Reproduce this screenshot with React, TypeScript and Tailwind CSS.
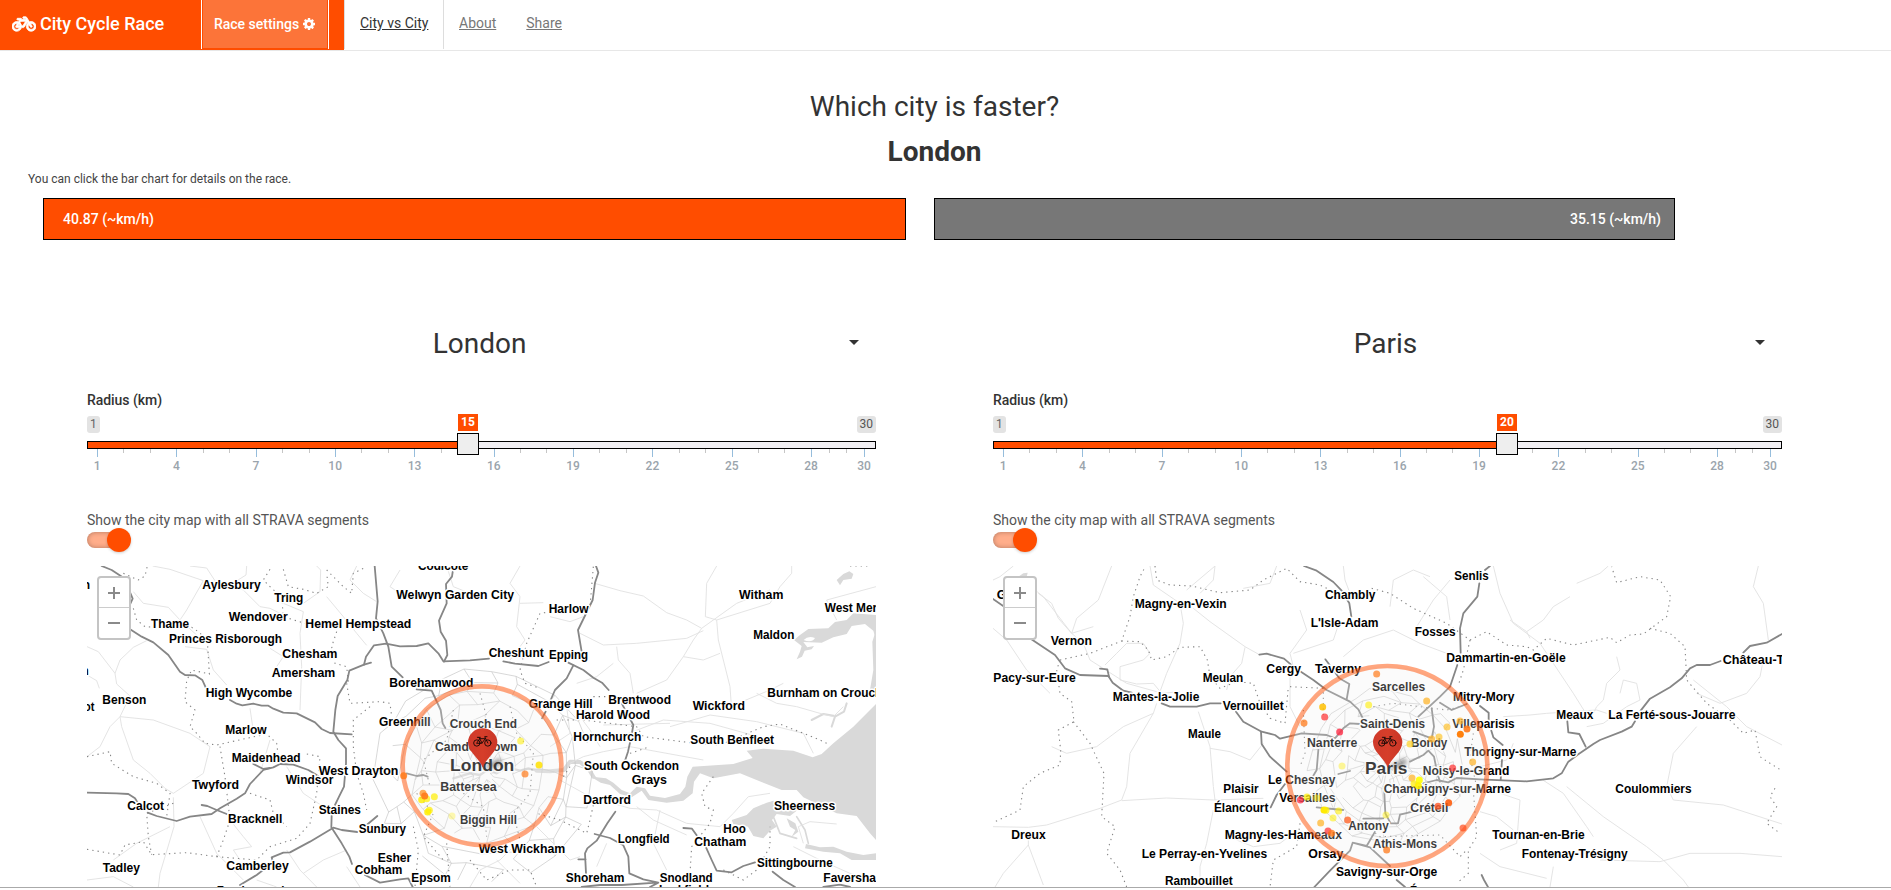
import React from "react";
import { FaBicycle } from "react-icons/fa";

type Label = [text: string, x: number, y: number, width: number, size?: number];
type Dot = [x: number, y: number, color: string, opacity?: number];

interface CityMap {
  origin: number;
  water: string[];
  urban: { cx: number; cy: number; r: number; seed: number };
  motorways: string[];
  roads: string[];
  borders: string[];
  labels: Label[];
  dots: Dot[];
  circle: { cx: number; cy: number; r: number };
  pin: { x: number; y: number };
}

const YELLOW = "#ffee00";
const AMBER = "#ffb52e";
const ORANGE = "#ff7a1a";
const RED = "#ff3b3b";

const london: CityMap = {
  origin: 51,
  water: [
    "M2418 165 L2350 160 L2330 180 L2295 186 L2275 205 L2215 207 L2190 225 L2172 240 L2195 258 L2190 275 L2180 298 L2196 290 L2204 272 L2225 268 L2232 258 L2212 262 L2200 246 L2255 248 L2290 232 L2330 222 L2345 198 L2385 192 L2410 212 L2418 240Z",
    "M2201 240 Q2215 225 2235 234 Q2225 250 2201 240Z",
    "M2418 210 L2407 245 L2410 330 L2400 390 L2380 412 L2418 410Z",
    "M2418 432 L2350 500 L2290 550 L2255 582 L2228 592 L2170 572 L2080 566 L2030 572 L2048 594 L1990 612 L1868 620 L1852 650 L1846 680 L1830 702 L1785 714 L1740 707 L1725 685 L1700 680 L1680 700 L1655 690 L1630 668 L1608 655 L1580 652 L1560 640 L1570 655 L1592 668 L1620 675 L1650 702 L1685 712 L1715 692 L1735 720 L1790 728 L1840 722 L1868 700 L1872 665 L1890 640 L1930 655 L2010 640 L2080 668 L2135 690 L2180 690 L2200 712 L2300 760 L2360 768 L2400 820 L2418 840Z",
    "M2418 880 L2380 885 L2330 875 L2290 860 L2250 862 L2208 852 L2205 865 L2260 875 L2310 880 L2345 900 L2418 900Z",
    "M1985 780 L2030 765 L2050 745 L2090 728 L2110 722 L2125 738 L2165 740 L2180 752 L2160 768 L2120 762 L2106 780 L2120 800 L2100 812 L2080 835 L2050 828 L2034 800 L1990 792Z",
    "M2300 60 L2320 42 L2338 34 L2350 42 L2345 56 L2320 60 L2310 76Z",
    "M2150 775 L2160 800 L2176 810 L2165 830 L2185 815 L2176 790Z",
  ],
  urban: { cx: 1240, cy: 640, r: 330, seed: 7 },
  motorways: [
    "M95 18 L125 30 L158 52",
    "M178 92 L188 116 L178 138",
    "M178 206 L215 230 L250 247 L295 285 L330 335 L345 345 L375 346 L397 360 L407 382",
    "M480 420 L500 431 L517 436 L550 431 L575 437 L595 437 L610 446 L640 458 L680 460 L735 487 L755 507 L780 519 L845 523",
    "M914 18 L923 124 L918 175 L940 220 L955 260 L965 320 L998 352 M1040 388 L1085 392 L1112 450 L1118 490 L1126 504",
    "M1148 36 L1146 50 L1128 72 L1130 130 L1107 182 L1112 215 L1128 242 L1132 285 L1122 305",
    "M903 308 L882 314 L838 332 L832 360 L803 408 L796 450 L790 515 L805 540 L828 565 L828 610 L822 680 L806 712 L795 735 M785 766 L784 802 L815 850 L838 890 L846 912",
    "M882 314 L888 290 L912 256 L948 251 L990 259 L1040 258 L1075 250 L1105 280 L1120 304 L1200 301 L1257 296 M1300 304 L1335 311 L1405 318 L1436 306 M1495 308 L1540 330 L1570 353 L1596 368 L1616 390 M1655 430 L1690 495 L1684 530 L1674 575 L1665 602",
    "M1578 18 L1585 38 L1575 68 L1568 120 L1524 210 L1535 275 M1510 316 L1490 355 L1455 390 L1442 420 M1427 455 L1416 475",
    "M51 698 L140 700 L175 702 L195 715 L210 740 M233 758 L260 768 L320 783 L360 770 L425 762 L450 745 L500 716 L525 700 L540 672 L580 630 L610 622 L630 612 L670 614 L715 630 L740 645",
    "M550 612 L580 627 L600 624",
    "M395 735 L412 738 L440 750 L470 762",
    "M1010 640 L1040 648 L1060 645 L1073 650",
    "M510 975 L560 945 L590 922 L610 912 L605 892 L640 878 L660 877 L720 845 L745 830 L790 803 L815 810 L862 816 M890 795 L922 768",
    "M885 945 L930 968 L990 958 L1015 955 L1028 981",
    "M1636 755 L1612 790 L1580 842 L1552 865 L1545 880 L1548 940 M1574 822 L1620 834 L1660 856 L1675 890 L1678 940 L1720 958 L1765 968 L1740 981 M1525 898 L1547 898 M1535 981 L1590 975 L1655 975 L1760 968",
    "M1840 804 L1866 806 L1880 826 M1908 862 L1925 900 L1940 932 L1985 937 L2020 918 L2055 907 M2108 935 L2140 960 L2175 981 M2260 981 L2310 974 L2340 981",
  ],
  roads: [
    "M51 260 L85 275 L135 340 L150 300 L190 262 L230 242 M135 340 L140 372 L180 408 L150 470 L155 500 L190 600 L240 640 L285 685 L310 700 L400 640 L420 560 L360 520 L250 480 L150 470",
    "M51 590 L90 560 L120 500 L150 470 M51 345 L80 362 L88 385 M310 712 L312 800 L270 940 L265 981",
    "M190 95 L220 130 L295 142 L330 180 L380 225 M400 62 L350 150 L330 180 M248 18 L300 28 L400 62 M530 18 L528 45 L480 75 L520 90 L570 140 L600 145 L640 165",
    "M345 260 L410 268 L430 330 L470 375 M540 445 L548 500 M360 18 L410 24 L440 70 M740 18 L752 30 L750 95 L700 130",
    "M640 130 L700 155 L690 220 L695 320 L690 450 M600 265 L640 290 L620 320 M770 110 L820 170 L860 220 L890 256",
    "M600 540 L570 640 M650 620 L700 700 L760 740 M480 780 L520 830 L545 860 L490 870 L510 900",
    "M51 960 L130 950 L190 981 M130 900 L200 850 L300 800 M390 770 L440 880 L520 960",
    "M650 870 L690 930 L740 981 M700 940 L760 900 L830 870 M560 960 L620 981 M830 920 L870 981",
    "M860 18 L840 60 L880 100 L920 125 M990 30 L960 80 L1020 120 M1130 18 L1150 80 L1200 100",
    "M1350 18 L1320 70 L1350 110 L1340 200 L1365 240 L1320 300 M1350 130 L1420 128 M1440 170 L1500 185 L1540 170 M1530 220 L1600 255 L1700 250 L1850 235 L1900 212",
    "M1574 70 L1650 92 L1720 108 L1790 158 L1850 180 L1895 205 L2000 130 L2100 90 M1895 205 L1870 240 L1840 290 L1790 360 L1700 400",
    "M1940 18 L1910 70 L1906 170 L1940 180 L1945 240 L1980 380 L1985 450 M1840 290 L1900 300 L1950 280",
    "M1640 260 L1645 300 L1680 340 L1690 400 M1630 310 L1580 350 L1520 370",
    "M1800 500 L1920 465 L2060 485 L2200 520 L2230 580 M1650 530 L1780 480 L1920 490 L2100 540 M1600 495 L1800 490",
    "M1940 180 L2100 130 L2130 80 L2165 40 L2165 18 M2300 180 L2270 120 L2418 80",
    "M1500 610 L1540 590 L1600 575 L1680 560 L1900 600 M1470 660 L1560 710 L1680 745 L1760 750 L1850 790 L1950 800",
    "M1700 740 L1750 780 L1850 825 M1610 850 L1580 920 M1770 750 L1750 850 L1790 930",
    "M1950 800 L1990 760 L2035 710 L2100 700 M2170 860 L2250 900 L2340 940 L2418 960 M2200 850 L2185 800 L2220 785 L2300 792",
    "M1980 440 L2100 390 L2140 370 M2060 400 L2120 430 L2180 440 L2250 460 L2290 470 L2320 440",
    "M1200 981 L1230 930 L1290 900 L1330 860 M1400 800 L1470 870 L1500 900 L1530 890 M1280 900 L1350 970",
    "M1490 440 L1500 520 L1440 560 M1560 430 L1530 470 L1560 510 L1590 560",
  ],
  borders: [
    "M160 40 L205 60 L225 48 L232 18",
    "M190 145 L200 180 L225 200 L260 202 L365 202 L385 215 L412 240 L415 290 L418 342 L365 330 L350 362 L345 425 L375 450 L360 500 L380 520 L405 550 L440 555 L530 535 L590 522 L620 550 L625 590",
    "M600 28 L580 60 L605 85 L635 110 L640 170 L720 195 M640 28 L655 80 L700 88 L740 100 L775 80 L770 40 M770 30 L820 80 L845 100 L850 40 L880 25",
    "M800 215 L785 260 L795 310 L830 320 L835 365 M830 370 L840 430 L930 425 L960 430 L965 470",
    "M51 590 L120 575 L125 610 L190 650 L260 670 L300 700 L290 770 M310 730 L230 760 L235 830 L245 884",
    "M51 868 L150 885 L165 855 L220 845 L245 884 L350 878 L440 890 L460 840 L480 780 L465 650 L450 560",
    "M540 700 L600 720 L610 760 L650 800 M440 890 L560 900 L600 860 L680 835 L720 790 L740 700 L750 590 L700 580",
    "M900 440 L850 480 L850 560 L860 640 L880 700 L890 750 M1570 20 L1560 140 L1410 160 L1370 250 L1350 330 L1365 370 L1410 385",
    "M1570 410 L1620 410 M1460 480 L1540 480 L1700 500 L1720 530 L1860 548 L1950 555 L2080 500 L2130 492 L2250 540 L2280 555",
    "M1680 580 L1740 560 M1500 620 L1480 650 M1570 735 L1560 780 L1550 820 L1470 780 L1400 760",
    "M1930 650 L1895 700 L1905 740 L1930 750 L1920 790 L1865 860 L1860 940 M1960 930 L2020 960 L2060 930 L2100 860 L2100 800",
    "M1200 900 L1250 960 L1320 930 L1380 930 L1400 981 M2340 18 L2400 18",
    "M1030 800 L1045 870 L1035 980 M1130 850 L1140 980",
    "M1040 700 L1090 760 L1060 830 L1120 900 M1150 450 L1130 540 L1060 600 L1080 680 M1320 440 L1340 520 L1390 580 L1380 700 L1330 760 L1350 840 M1180 700 L1240 740 L1250 830 M1230 400 L1250 470",
  ],
  labels: [
    ["Aylesbury", 397, 87, 175], ["Tring", 613, 126, 87], ["Wendover", 476, 182, 177], ["Thame", 243, 205, 114],
    ["Princes Risborough", 297, 248, 339], ["Hemel Hempstead", 706, 205, 318], ["Chesham", 637, 293, 165],
    ["Amersham", 605, 352, 191], ["High Wycombe", 407, 411, 260], ["Benson", 97, 432, 132], ["Marlow", 466, 523, 124],
    ["Maidenhead", 485, 605, 207], ["Twyford", 366, 688, 141], ["Windsor", 647, 673, 143], ["West Drayton", 746, 644, 239],
    ["Calcot", 172, 749, 110], ["Bracknell", 474, 790, 163], ["Staines", 746, 761, 127], ["Sunbury", 866, 820, 142],
    ["Camberley", 469, 930, 187], ["Tadley", 98, 936, 112], ["Esher", 923, 906, 101], ["Cobham", 854, 942, 143],
    ["Epsom", 1024, 966, 118], ["Farnborough", 440, 1005, 215], ["Codicote", 1044, 29, 151], ["Welwyn Garden City", 979, 116, 353],
    ["Borehamwood", 958, 381, 252], ["Greenhill", 927, 498, 155], ["Crouch End", 1139, 503, 202], ["Camden Town", 1095, 573, 247],
    ["London", 1140, 633, 193, 51], ["Battersea", 1111, 692, 169], ["Biggin Hill", 1170, 791, 171], ["West Wickham", 1226, 878, 260],
    ["Harlow", 1436, 158, 120], ["Cheshunt", 1256, 292, 165], ["Epping", 1437, 296, 117], ["Grange Hill", 1376, 445, 192],
    ["Brentwood", 1615, 431, 188], ["Harold Wood", 1518, 478, 222], ["Hornchurch", 1510, 544, 204], ["South Ockendon", 1542, 630, 285],
    ["Grays", 1685, 673, 106], ["Dartford", 1540, 732, 143], ["Longfield", 1643, 848, 156], ["Shoreham", 1487, 965, 176],
    ["Snodland", 1769, 965, 159], ["Larkfield", 1767, 1002, 150], ["Witham", 2007, 116, 133], ["West Mersea", 2264, 155, 217],
    ["Maldon", 2050, 238, 123], ["Burnham on Crouch", 2092, 411, 345], ["Wickford", 1868, 449, 157], ["South Benfleet", 1861, 551, 251],
    ["Sheerness", 2112, 751, 184], ["Hoo", 1960, 820, 68], ["Chatham", 1873, 857, 156], ["Sittingbourne", 2061, 922, 227],
    ["Faversham", 2260, 965, 190], ["n", 38, 88, 22], ["ot", 42, 452, 31], ["n", 36, 346, 20],
  ],
  dots: [
    [1352, 543, YELLOW, 0.55], [1407, 615, "#ffe100", 0.85], [1365, 642, ORANGE, 0.7], [1001, 647, ORANGE, 0.85],
    [1059, 700, "#ff9a2e", 0.8], [1055, 719, YELLOW, 0.8], [1070, 716, YELLOW, 0.7], [1093, 710, YELLOW, 0.7],
    [1064, 708, ORANGE, 0.9], [1078, 751, YELLOW, 0.7], [1073, 756, YELLOW, 0.85], [1146, 768, YELLOW, 0.3],
  ],
  circle: { cx: 1236, cy: 617, r: 238 },
  pin: { x: 1238, y: 623 },
};

const paris: CityMap = {
  origin: 39,
  water: ["M115 50 L130 40 L143 38 L140 50Z"],
  urban: { cx: 1220, cy: 620, r: 240, seed: 19 },
  motorways: [
    "M39 117 L75 142 M152 236 L225 285 L255 325 L300 345 L385 348 L398 368 L430 392 L455 398",
    "M360 326 L382 328 L387 350 M545 430 L570 440 L650 440 L690 430 L722 430",
    "M768 455 L790 485 L845 515 L885 525 L900 536 L965 520 L1040 525 L1065 535 L1090 505 L1110 490 L1140 492",
    "M843 515 L845 552 L870 590 L920 635 M915 672 L890 705 L872 742",
    "M972 18 L1010 32 L1060 66 L1085 92 L1108 130 L1114 170",
    "M838 284 L860 281 L912 296 L940 320 L1000 360 L1040 390 L1110 425 L1135 448 L1150 478",
    "M1036 298 L1060 330 L1078 355 L1108 372 L1100 418",
    "M1498 70 L1492 110 L1450 160 L1440 205 L1442 278 M1432 315 L1410 380 L1380 410 L1315 470",
    "M1515 30 L1530 18 M1380 428 L1415 450 L1460 432 M1500 438 L1526 458 L1526 480 M1534 512 L1540 532 L1568 555 M1566 600 L1562 660",
    "M1355 445 L1362 500 L1355 535 L1300 515 M1290 605 L1330 585 L1345 572 L1362 590 L1372 640 L1380 665",
    "M1330 670 L1370 660 L1405 667 L1430 654 L1500 658 L1640 664 L1720 655 L1745 640 L1765 605 L1792 585",
    "M1795 583 L1840 552 L1860 540 L1925 515 L1955 500 L1965 484 M1982 452 L2010 416 L2070 382 L2105 355 L2130 325 L2150 315 L2190 315 L2222 303 M2290 278 L2310 258 L2360 248 L2406 222",
    "M1762 484 L1765 517 L1798 522 L1817 560",
    "M1003 981 L1050 932 L1110 872 L1118 848 L1170 862 L1230 918 M1118 848 L1160 858 L1185 815",
    "M1505 945 L1512 960 L1524 981 M1250 960 L1275 981 M1150 776 L1210 775",
    "M1212 680 L1216 760 L1232 790 L1254 790 L1260 764 L1310 752 M1015 570 L1010 630 L998 650 M1075 642 L1110 633 M1010 742 L1090 750",
  ],
  roads: [
    "M100 18 L60 50 L39 60 M120 55 L190 110 L275 220 L340 200 M175 100 L215 130 L235 175 L275 220 L310 250 L330 300 L385 335 L440 370 L530 395",
    "M395 18 L355 120 L290 175 L275 220 M39 205 L80 240 L140 330 L210 400",
    "M375 315 L410 280 L440 250 L490 250 L510 280 L490 300 L420 320 L420 360 L470 372 L520 370 L545 400 L600 395",
    "M540 395 L560 340 L600 250 L610 190 L600 130 L520 75 L510 18",
    "M640 145 L690 185 L795 260 L840 285 M795 262 L785 310 L750 350 L740 390",
    "M660 100 L700 60 L705 18 L620 90 M530 430 L520 460 L450 580 L440 680 L425 720 L360 745 L200 795 L145 802 L39 800",
    "M215 560 L260 580 L350 560 L430 500 L520 460 M145 830 L145 855 L70 940 L45 981 M145 855 L190 975",
    "M425 722 L560 714 L700 720 L850 715 M655 455 L690 560 L700 680 L705 720 M690 565 L750 575 L810 600 L850 550",
    "M700 750 L680 850 L660 920 L660 960 M940 820 L900 850 L820 860 L770 840",
    "M890 18 L870 70 L790 85 M1090 18 L1095 60 L1110 100 M960 150 L980 210 L930 280 L940 320 M940 280 L1060 240 L1080 180",
    "M1090 290 L1150 240 L1240 210 L1320 250 L1400 280 M930 320 L930 440 L960 500",
    "M1230 140 L1240 60 L1300 30 L1350 50 M1330 50 L1400 110 L1410 180 M1410 60 L1360 120 L1310 200",
    "M1540 18 L1560 100 L1600 190 L1680 250 L1780 400 L1830 480 M1790 70 L1860 40 L1885 18",
    "M1640 215 L1690 180 L1720 140 L1770 110 M1590 180 L1640 215 L1650 235",
    "M1570 470 L1650 465 L1700 460 L1850 450 L1880 460 M1600 550 L1580 600 L1500 620",
    "M1830 480 L1850 440 L1870 420 L1880 370 L1920 330 L1910 290",
    "M2140 360 L2240 440 L2300 500 L2406 555 M2150 500 L2080 580 L2060 680 L2080 720 L2230 735 L2406 792",
    "M1760 680 L1870 770 L2000 860 L2050 900 L2110 960 L2125 981 M1860 900 L2040 905 L2130 880 L2280 880 L2406 890",
    "M2335 18 L2320 80 L2350 130 L2365 240 M2150 400 L2220 430 L2300 400 L2340 350 L2350 300",
    "M1510 660 L1560 700 L1620 720 L1610 850 L1560 870 M1690 661 L1750 700 L1820 800 L1840 830",
    "M1500 880 L1560 920 L1700 955 M1720 920 L1710 981 M1500 755 L1550 770 L1600 810",
    "M1820 500 L1870 490 L1940 440 L1980 420 L1970 370 L1930 360 L1920 400",
  ],
  borders: [
    "M240 300 L230 330 L240 400 L275 425 L282 485 L235 510 L242 570 L240 615 L180 640 L130 680 L120 750 L45 785",
    "M240 300 L330 280 L425 243 L450 170 L460 110 L480 50 L497 18 M425 243 L480 245 L505 270 L515 300 L560 290 L600 262 L660 260 L682 300 L690 350 L720 385 L770 365 L820 370 L840 430 L870 475",
    "M280 485 L330 550 L372 640 L365 770 L405 800 L380 880 L420 930 L440 981",
    "M525 18 L530 60 L570 75 L635 78 L720 98 L810 90 L850 60 L920 25 L960 65 L1020 75 L1060 95",
    "M1175 85 L1230 100 L1300 145 L1400 190 L1470 240 L1520 215 L1580 255 L1640 260 L1660 270 L1700 235 L1780 255 L1890 232 L1910 248 L1950 225 L1990 222 L2060 170 L2072 110 L2040 60 L1980 50 L1910 68 L1895 20",
    "M2010 205 L2070 220 L2115 260 L2120 360 L2180 430 L2250 480 L2290 520 L2325 510 L2340 590 L2370 610 L2406 632",
    "M2385 685 L2370 710 L2390 740 L2360 790 L2400 820 M1470 240 L1450 330 L1435 375",
    "M930 380 L1030 385 L1030 470 M870 475 L915 490 L925 380 M960 790 L950 860 L880 900 L870 981",
    "M1180 440 L1240 430 L1400 450 L1440 440 M1160 800 L1200 830 L1380 825 L1440 890 L1460 870 M1480 690 L1490 830 L1465 870 L1465 940 L1430 970",
    "M970 450 L975 580 L960 620 M1480 520 L1470 590 L1490 680",
  ],
  labels: [
    ["Gisors", 50, 117, 120], ["Magny-en-Vexin", 464, 144, 276], ["Chambly", 1035, 117, 151], ["L'Isle-Adam", 992, 200, 203],
    ["Vernon", 212, 256, 124], ["Pacy-sur-Eure", 40, 367, 247], ["Mantes-la-Jolie", 398, 422, 260], ["Meulan", 668, 367, 122],
    ["Cergy", 859, 339, 104], ["Taverny", 1005, 339, 138], ["Vernouillet", 728, 450, 183], ["Maule", 624, 533, 99],
    ["Nanterre", 981, 561, 151], ["Le Chesnay", 864, 672, 202], ["Plaisir", 730, 699, 106], ["Élancourt", 702, 755, 163],
    ["Versailles", 898, 727, 169], ["Dreux", 94, 838, 103], ["Magny-les-Hameaux", 734, 838, 352], ["Le Perray-en-Yvelines", 485, 893, 377],
    ["Orsay", 985, 893, 105], ["Rambouillet", 555, 976, 203], ["Antony", 1105, 810, 121], ["Athis-Mons", 1178, 865, 193],
    ["Savigny-sur-Orge", 1068, 949, 304], ["Sarcelles", 1176, 394, 160], ["Saint-Denis", 1140, 505, 195], ["Paris", 1155, 643, 127, 51],
    ["Senlis", 1423, 61, 103], ["Fosses", 1304, 228, 123], ["Dammartin-en-Goële", 1399, 305, 358], ["Mitry-Mory", 1419, 422, 184],
    ["Villeparisis", 1417, 505, 187], ["Bondy", 1293, 561, 109], ["Thorigny-sur-Marne", 1453, 588, 336], ["Noisy-le-Grand", 1328, 644, 260],
    ["Champigny-sur-Marne", 1211, 699, 382], ["Créteil", 1291, 755, 114], ["Meaux", 1729, 478, 111], ["La Ferté-sous-Jouarre", 1885, 478, 381],
    ["Château-Thierry", 2228, 311, 290], ["Coulommiers", 1906, 699, 229], ["Tournan-en-Brie", 1537, 838, 277],
    ["Fontenay-Trésigny", 1625, 893, 318], ["Évry", 1290, 1004, 70],
  ],
  dots: [
    [1190, 342, ORANGE, 0.7], [1166, 435, YELLOW, 0.6], [1028, 441, "#ffbf00", 0.85], [1034, 471, RED, 0.75], [972, 489, ORANGE, 0.75],
    [1079, 516, "#ff2d46", 0.8], [1086, 618, YELLOW, 0.4], [961, 720, "#ff2d46", 0.75], [981, 711, YELLOW, 0.7], [1010, 714, YELLOW, 0.5],
    [1032, 750, "#ffe600", 0.95], [1038, 751, YELLOW, 0.7], [1076, 753, YELLOW, 0.6], [1059, 774, YELLOW, 0.55], [1022, 789, AMBER, 0.75],
    [1103, 780, "#ff5a1a", 0.75], [1044, 813, RED, 0.75], [1055, 820, ORANGE, 0.8], [1218, 765, YELLOW, 0.45], [1220, 870, ORANGE, 0.75],
    [1340, 423, AMBER, 0.75], [1401, 501, "#ffc22e", 0.7], [1440, 483, AMBER, 0.7], [1461, 507, ORANGE, 0.9], [1441, 523, "#ff7a00", 0.95],
    [1355, 537, AMBER, 0.75], [1377, 531, "#ffc93c", 0.75], [1290, 552, "#ffd633", 0.75], [1478, 606, AMBER, 0.75], [1418, 624, RED, 0.75],
    [1296, 654, AMBER, 0.75], [1318, 660, "#ffff00", 0.9], [1302, 671, YELLOW, 0.7], [1315, 677, "#fff200", 0.9], [1374, 739, "#ff5a2a", 0.8],
    [1406, 728, "#ff5500", 0.85], [1449, 804, "#ff4a1a", 0.7],
  ],
  circle: { cx: 1222, cy: 618, r: 300 },
  pin: { x: 1223, y: 623 },
};

/** Deterministic web of short streets, dense towards the city centre. */
function streetWeb({ cx, cy, r, seed }: CityMap["urban"]): string {
  let s = seed;
  const rand = () => {
    s = (s * 16807) % 2147483647;
    return s / 2147483647;
  };
  for (let i = 0; i < 5; i++) rand();
  const rings = 9;
  const spokes = 22;
  const pts: [number, number][][] = [];
  for (let i = 0; i < rings; i++) {
    const row: [number, number][] = [];
    for (let j = 0; j < spokes; j++) {
      const a = ((j + (rand() - 0.5) * 0.8) / spokes) * Math.PI * 2;
      const d = r * ((i + 0.7 + (rand() - 0.5) * 0.8) / rings);
      row.push([Math.round(cx + Math.cos(a) * d), Math.round(cy + Math.sin(a) * d)]);
    }
    pts.push(row);
  }
  let path = "";
  for (let i = 0; i < rings; i++) {
    for (let j = 0; j < spokes; j++) {
      const [x, y] = pts[i][j];
      const [nx, ny] = pts[i][(j + 1) % spokes];
      if (rand() < 0.72) path += `M${x} ${y}L${nx} ${ny}`;
      if (i + 1 < rings && rand() < 0.8) path += `M${x} ${y}L${pts[i + 1][j][0]} ${pts[i + 1][j][1]}`;
    }
  }
  return path;
}

const BICYCLE = (
  <g fill="none" stroke="#140806" strokeWidth="2.7" strokeLinejoin="round" strokeLinecap="round">
    <circle cx="-16.500" cy="5" r="9.500" />
    <circle cx="16.500" cy="5" r="9.500" />
    <path d="M-16.500 5 L-8 -8 L9 -8 L-1 5 Z M-1 5 L-10 -12 M-15 -12 L-6 -12 M16.500 5 L7 -14 L14 -14" />
  </g>
);

function CogIcon() {
  return (
    <svg width="14" height="14" viewBox="0 0 1792 1792" fill="currentColor">
      <path d="M1152 896q0-106-75-181t-181-75-181 75-75 181 75 181 181 75 181-75 75-181zm512-109v222q0 12-8 23t-20 13l-185 28q-19 54-39 91 35 50 107 138 10 12 10 25t-9 23q-27 37-99 108t-94 71q-12 0-26-9l-138-108q-44 23-91 38-16 136-29 186-7 28-36 28h-222q-14 0-24.500-8.500t-11.500-21.500l-28-184q-49-16-90-37l-141 107q-10 9-25 9-14 0-25-11-126-114-165-168-7-10-7-23 0-12 8-23 15-21 51-66.500t54-70.500q-27-50-41-99l-183-27q-13-2-21-12.500t-8-23.500v-222q0-12 8-23t19-13l186-28q14-46 39-92-40-57-107-138-10-12-10-24 0-10 9-23 26-36 98.500-107.500t94.500-71.500q13 0 26 10l138 107q44-23 91-38 16-136 29-186 7-28 36-28h222q14 0 24.500 8.500t11.500 21.500l28 184q49 16 90 37l142-107q9-9 24-9 13 0 25 10 129 119 165 170 7 8 7 22 0 12-8 23-15 21-51 66.500t-54 70.500q26 50 41 98l183 28q13 2 21 12.500t8 23.500z" />
    </svg>
  );
}

function MapView({ map }: { map: CityMap }) {
  const id = `shade-${map.origin}`;
  const { circle, pin } = map;
  return (
    <div className="relative h-[321px] w-[789px] overflow-hidden bg-white">
      <svg className="block" width="789" height="321" viewBox={`${map.origin} 18 2367 963`} fontFamily='"Liberation Sans", Arial, sans-serif'>
        <defs>
          <linearGradient id={`${id}-pin`} x1="0" y1="0" x2="1" y2="0">
            <stop offset="0" stopColor="#cf3a2b" />
            <stop offset="0.5" stopColor="#d63e2a" />
            <stop offset="1" stopColor="#c93627" />
          </linearGradient>
          <filter id={`${id}-blur`} x="-50%" y="-50%" width="200%" height="200%">
            <feGaussianBlur stdDeviation="7" />
          </filter>
        </defs>
        <g fill="#d9d9d9">
          {map.water.map((d, i) => (
            <path key={i} d={d} fill={i === 1 && map.water.length > 1 ? "#fff" : undefined} />
          ))}
        </g>
        {map.water.length > 1 && (
          <g fill="none" stroke="#d9d9d9" strokeLinejoin="round" strokeLinecap="round">
            <path d="M1570 650 L1555 625 L1530 606 L1500 605 L1482 630 L1440 634 L1400 632" strokeWidth="12" />
            <path d="M1400 632 L1375 625 L1350 632 L1310 622 L1280 640 L1255 628 L1230 645 L1200 640 L1150 655" strokeWidth="7" />
            <path d="M2330 430 L2322 455 L2295 470 L2285 500 M2295 468 L2260 462 L2225 480" strokeWidth="6" />
            <path d="M2180 770 L2205 810 L2215 850 M2110 770 L2130 820 L2180 835" strokeWidth="5" />
          </g>
        )}
        <path d={streetWeb(map.urban)} fill="none" stroke="#c4c4c4" strokeWidth="2" />
        <g fill="none" stroke="#e2e2e2" strokeWidth="2.8" strokeLinejoin="round">
          {map.roads.map((d, i) => <path key={i} d={d} />)}
        </g>
        <g fill="none" stroke="#858585" strokeWidth="3.3" strokeDasharray="4 12">
          {map.borders.map((d, i) => <path key={i} d={d} />)}
        </g>
        <g fill="none" stroke="#868686" strokeWidth="5.4" strokeLinejoin="round" strokeLinecap="round">
          {map.motorways.map((d, i) => <path key={i} d={d} />)}
        </g>
        <g fontWeight="700" fill="#000" stroke="#fff" strokeWidth="9" strokeLinejoin="round" paintOrder="stroke">
          {map.labels.map(([text, x, y, width, size], i) => (
            <text key={i} x={x} y={y} fontSize={size ?? 37} textLength={width} lengthAdjust="spacingAndGlyphs">
              {text}
            </text>
          ))}
        </g>
        <circle cx={circle.cx} cy={circle.cy} r={circle.r} fill="#efefef" fillOpacity="0.25" />
        <circle cx={circle.cx} cy={circle.cy} r={circle.r} fill="none" stroke="#ff4d00" strokeOpacity="0.5" strokeWidth="14" />
        {map.dots.map(([x, y, color, opacity], i) => (
          <circle key={i} cx={x} cy={y} r="10.5" fill={color} fillOpacity={opacity ?? 0.8} />
        ))}
        <path d={`M${pin.x} ${pin.y} l52 -30 l6 18 l-30 12Z`} fill="#333" opacity="0.5" filter={`url(#${id}-blur)`} />
        <path
          d={`M${pin.x} ${pin.y} C${pin.x - 9} ${pin.y - 28} ${pin.x - 44} ${pin.y - 46} ${pin.x - 44} ${pin.y - 76} A44 42 0 0 1 ${pin.x + 44} ${pin.y - 76} C${pin.x + 44} ${pin.y - 46} ${pin.x + 9} ${pin.y - 28} ${pin.x} ${pin.y}Z`}
          fill={`url(#${id}-pin)`}
        />
        <g transform={`translate(${pin.x - 1} ${pin.y - 79})`}>{BICYCLE}</g>
      </svg>
      <div className="absolute left-[10px] top-[10px] flex h-[64px] w-[34px] flex-col rounded-[4px] border-2 border-[#c4c4c4] bg-white">
        <button aria-label="Zoom in" className="flex h-[30px] items-center justify-center border-b border-[#ccc]">
          <svg width="14" height="14" viewBox="0 0 14 14" stroke="#8a8a8a" strokeWidth="2"><path d="M7 1V13M1 7H13" /></svg>
        </button>
        <button aria-label="Zoom out" className="flex h-[30px] items-center justify-center">
          <svg width="14" height="14" viewBox="0 0 14 14" stroke="#8a8a8a" strokeWidth="2"><path d="M1 7H13" /></svg>
        </button>
      </div>
    </div>
  );
}

const FIRST_TICK = 10.5;
const STEP = 26.44;
const tickX = (v: number) => FIRST_TICK + (v - 1) * STEP;
const MAJOR = [1, 4, 7, 10, 13, 16, 19, 22, 25, 28, 30];
const MINOR = [2, 3, 5, 6, 8, 9, 11, 12, 14, 15, 17, 18, 20, 21, 23, 24, 26, 27, 28.667, 29.333];

function RadiusSlider({ value }: { value: number }) {
  const center = Math.round(tickX(value)) + (value === 20 ? 1 : 0);
  return (
    <div className="relative h-[60px] w-[789px] text-xs">
      <span className="absolute left-0 top-[2px] h-[17px] rounded-[3px] bg-[#e3e3e3] px-[3px] leading-[17px] text-[#666]">1</span>
      <span className="absolute right-0 top-[2px] h-[17px] rounded-[3px] bg-[#e3e3e3] px-[3px] leading-[17px] text-[#555]">30</span>
      <span className="absolute top-0 h-[17px] w-5 bg-[#ff4d00] text-center font-bold leading-[16px] text-white" style={{ left: center - 10 }}>
        {value}
      </span>
      <div className="absolute left-0 top-[27px] h-2 w-full border border-black bg-[#f1eff3]">
        <div className="h-full bg-[#ff4d00]" style={{ width: center }} />
      </div>
      {MINOR.map((v) => (
        <i key={v} className="absolute top-[35px] h-1 w-px bg-[#c6c6c6]" style={{ left: Math.floor(tickX(v)) }} />
      ))}
      {MAJOR.map((v) => (
        <React.Fragment key={v}>
          <i className="absolute top-[35px] h-2 w-px bg-[#96bddc]" style={{ left: Math.floor(tickX(v)) }} />
          <span className="absolute top-[45px] w-8 text-center font-medium leading-[14px] text-[#9aa4ac]" style={{ left: tickX(v) - 16.3 }}>
            {v}
          </span>
        </React.Fragment>
      ))}
      <div className="absolute top-[19px] size-[22px] border border-black bg-[#eee]" style={{ left: center - 11 }} />
    </div>
  );
}

function CityPanel({ name, radius, map }: { name: string; radius: number; map: CityMap }) {
  return (
    <section className="flex w-[789px] flex-col">
      <button className="relative h-[40px] w-full pr-1 text-center text-[28px] leading-[42px] text-[#333]">
        {name}
        <svg className="absolute left-[762px] top-[17px]" width="10" height="5" viewBox="0 0 10 5"><path d="M0 0H10L5 5Z" fill="#333" /></svg>
      </button>
      <label className="mt-[27px] h-5 text-sm font-medium leading-5 tracking-[-0.05px] text-[#333]">Radius (km)</label>
      <div className="mt-[4px]"><RadiusSlider value={radius} /></div>
      <p className="mt-[36px] h-5 text-sm leading-5 text-[#555]">Show the city map with all STRAVA segments</p>
      <div className="mt-[-2px] flex h-6 items-center">
        <span className="h-4 w-9 rounded-full bg-[#ffad8a] shadow-[inset_0_0_5px_rgba(0,0,0,0.3)]" />
        <span className="-ml-4 size-6 rounded-full bg-[#ff4d00] shadow-[0_1px_3px_rgba(0,0,0,0.2)]" />
      </div>
      <div className="mt-[14px]"><MapView map={map} /></div>
    </section>
  );
}

export default function App() {
  return (
    <div className="h-[890px] w-[1891px] overflow-hidden bg-white font-['Roboto',sans-serif] text-[#333]">
      <nav className="flex h-[51px] border-b border-[#e7e7e7] text-sm">
        <div className="flex h-[50px] w-[344px] bg-[#ff4d00] text-white">
          <a className="flex h-[48px] w-[201px] items-center gap-1 pl-[12px] text-[18px] font-medium">
            <FaBicycle size={24} stroke="currentColor" strokeWidth={22} />
            City Cycle Race
          </a>
          <div className="h-[49px] w-[128px] border-x border-white px-px">
            <a className="flex h-[48px] items-center justify-center gap-[3px] bg-[#fc7439] pb-px font-medium">
              Race settings <CogIcon />
            </a>
          </div>
        </div>
        <a className="h-[49px] w-[100px] border-x border-[#ddd] pl-[15px] leading-[46px] text-[#333] underline">City vs City</a>
        <a className="ml-[15px] leading-[46px] text-[#777] underline">About</a>
        <a className="ml-[30px] leading-[46px] text-[#777] underline">Share</a>
      </nav>

      <header className="w-[1869px] pt-[34px] text-center">
        <h1 className="text-[28px] leading-[44px]">Which city is faster?</h1>
        <h2 className="mt-[1px] text-[28px] font-bold leading-[44px]">London</h2>
      </header>
      <p className="-mt-[3px] h-[16px] pl-[28px] text-xs leading-[16px] text-[#444]">You can click the bar chart for details on the race.</p>

      <div className="ml-[43px] mt-[11px] flex h-[42px] gap-[28px] text-sm font-medium leading-[41px] text-white">
        <div className="w-[863px] border border-black bg-[#ff4d00] pl-[19px]">40.87 (~km/h)</div>
        <div className="w-[741px] border border-black bg-[#777] pr-[13px] text-right">35.15 (~km/h)</div>
      </div>

      <main className="ml-[87px] mt-[83px] flex gap-[117px]">
        <CityPanel name="London" radius={15} map={london} />
        <CityPanel name="Paris" radius={20} map={paris} />
      </main>
      <footer className="h-px bg-[#aaa]" />
    </div>
  );
}
